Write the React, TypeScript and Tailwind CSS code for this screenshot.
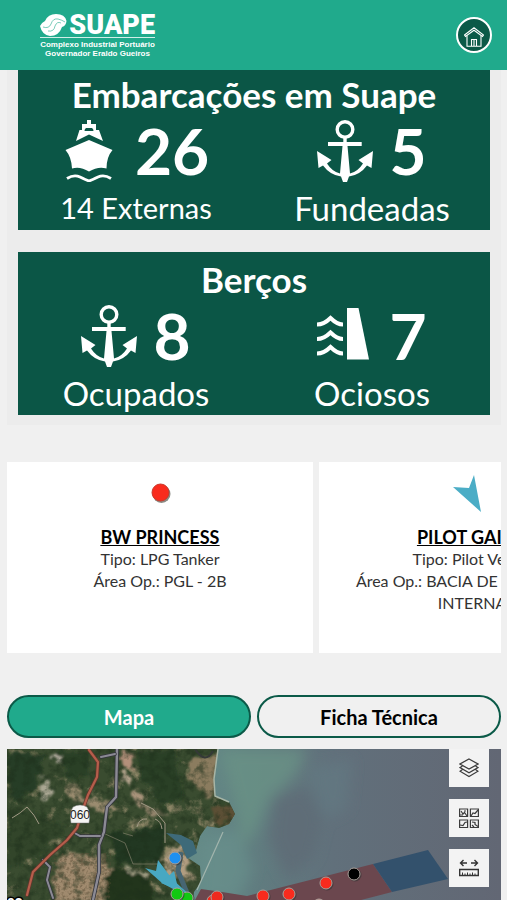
import React, { useState } from "react";

type Vessel = {
  name: string;
  type: string;
  area: string;
  moving: boolean;
};

const vessels: Vessel[] = [
  { name: "BW PRINCESS", type: "LPG Tanker", area: "PGL - 2B", moving: false },
  {
    name: "PILOT GAIBU",
    type: "Pilot Vessel",
    area: "BACIA DE EVOLUÇÃO INTERNA",
    moving: true,
  },
];

const markers = [
  { x: 168, y: 109, color: "#1e90f0" },
  { x: 180, y: 149, color: "#12c812" },
  { x: 170, y: 145, color: "#12c812" },
  { x: 206, y: 152, color: "#f02a1e" },
  { x: 210, y: 148, color: "#f02a1e" },
  { x: 256, y: 147, color: "#f92b1d" },
  { x: 282, y: 145, color: "#f92b1d" },
  { x: 319, y: 134, color: "#f92b1d" },
  { x: 312, y: 156, color: "#d98b8b" },
  { x: 347, y: 125, color: "#000000" },
];

const AnchorIcon = () => (
  <svg viewBox="0 0 56 62" className="h-[62px] w-14" fill="#fff">
    <circle cx="28" cy="9.500" r="7.800" fill="none" stroke="#fff" strokeWidth="3.400" />
    <path d="M26.300 17h3.400v5h15v4H30.500L33 53.500Q41 51.500 46 43.500L41.500 40L56 31L54.500 48L50 45.500Q43 55 32 56.500L30 62H26L24 56.500Q13 55 6 45.500L1.500 48L0 31L14.500 40L10 43.500Q15 51.500 23 53.500L25.500 26H11v-4h15.300z" />
  </svg>
);

const ShipIcon = () => (
  <svg viewBox="0 0 56 62" className="h-[62px] w-14" fill="#fff">
    <path
      fillRule="evenodd"
      d="M24 0h4v4h5v6h3l4 11L26 14.500L13 21l3.500-11H19V4h5zM23 8q-1.500 1-1.500 3h9q0-2-1.500-3z"
    />
    <path d="M26 20L49.500 30Q43.500 37 43.500 48.500Q35 46 26 51.500Q17 46 9 48.500Q8.500 37 2.500 30z" />
    <path
      d="M4 58.500q7-4.500 13-1.500q6 3 9 4q3-1 9-4q6-3 13 1.500"
      fill="none"
      stroke="#fff"
      strokeWidth="2.800"
    />
  </svg>
);

const BerthIcon = () => (
  <svg viewBox="0 0 56 62" className="h-[62px] w-14" fill="#fff">
    <path d="M30 3h11.500l10.500 51.500H30z" />
    <g fill="none" stroke="#fff" strokeWidth="4">
      <path d="M0 19.500q7 0 13.500-6.500q6.500 6.500 12.500 6.500" />
      <path d="M0 34q7 0 13.500-6.500q6.500 6.500 12.500 6.500" />
      <path d="M0 48.500q7 0 13.500-6.500q6.500 6.500 12.500 6.500" />
    </g>
  </svg>
);

type StatProps = {
  icon: React.ReactNode;
  value: number;
  label: string;
  small?: boolean;
};

const Stat = ({ icon, value, label, small }: StatProps) => (
  <div className="flex flex-col items-center">
    <div className="flex h-[66px] items-center justify-center gap-4">
      {icon}
      <span className="text-[64px] leading-[66px] font-bold">{value}</span>
    </div>
    <p className={`${small ? "text-[29px]" : "text-[33px]"} leading-[48px]`}>{label}</p>
  </div>
);

const VesselCard = ({ vessel }: { vessel: Vessel }) => (
  <article className="h-[191px] w-[306px] shrink-0 bg-white px-7 text-center text-[#333]">
    <div className="flex h-16 items-center justify-center">
      {vessel.moving ? (
        <svg viewBox="0 0 44 38" className="h-[38px] w-11">
          <path d="M3 12L19 13L24 0L31 37z" fill="#4badc6" />
        </svg>
      ) : (
        <svg viewBox="0 0 24 24" className="h-6 w-6">
          <circle cx="13.500" cy="12" r="9" fill="#8b8b84" />
          <circle cx="12.500" cy="10.500" r="8.500" fill="#f92b1d" stroke="#c9392c" />
        </svg>
      )}
    </div>
    <h3 className="text-lg leading-[22px] font-bold text-black underline">
      <a href="#ficha">{vessel.name}</a>
    </h3>
    <p className="text-base leading-[22px]">Tipo: {vessel.type}</p>
    <p className="text-base leading-[22px]">Área Op.: {vessel.area}</p>
  </article>
);

const PortMap = () => (
  <svg
    viewBox="0 0 494 151"
    preserveAspectRatio="xMinYMin slice"
    className="absolute inset-0 h-full w-full"
  >
    <defs>
      <linearGradient id="sea" x1="0" x2="1" y1="0" y2="0">
        <stop offset="0.38" stopColor="#648a87" />
        <stop offset="0.48" stopColor="#607e80" />
        <stop offset="0.66" stopColor="#61707b" />
        <stop offset="1" stopColor="#626774" />
      </linearGradient>
      <clipPath id="coast">
        <path d="M0 0H211L207 30L208 47L222 53L228 65L222 75L212 79L200 77L193 87L189 101L181 109L193 117L194 133L187 143L186 151H0z" />
      </clipPath>
      {/* speckled ground: bare soil patches over forest */}
      <filter id="soil" x="0" y="0" width="100%" height="100%" colorInterpolationFilters="sRGB">
        <feTurbulence type="fractalNoise" baseFrequency="0.06" numOctaves="5" seed="8" />
        <feColorMatrix values="0 0 0 0 0.55  0 0 0 0 0.52  0 0 0 0 0.4  5 0 0 0 -2.9" />
      </filter>
      <filter id="forest" x="0" y="0" width="100%" height="100%" colorInterpolationFilters="sRGB">
        <feTurbulence type="fractalNoise" baseFrequency="0.12" numOctaves="4" seed="3" />
        <feColorMatrix values="0 0 0 0 0.12  0 0 0 0 0.19  0 0 0 0 0.11  0 3 0 0 -1.3" />
      </filter>
      <filter id="town" x="0" y="0" width="100%" height="100%" colorInterpolationFilters="sRGB">
        <feTurbulence type="fractalNoise" baseFrequency="0.3" numOctaves="3" seed="5" />
        <feColorMatrix values="0 0 0 0 0.36  0 0 0 0 0.31  0 0 0 0 0.22  0 4 0 0 -1.9" />
      </filter>
      <filter id="soft" x="-30%" y="-30%" width="160%" height="160%">
        <feGaussianBlur stdDeviation="7" />
      </filter>
      <filter id="edge">
        <feTurbulence type="fractalNoise" baseFrequency="0.12" numOctaves="3" seed="2" />
        <feDisplacementMap in="SourceGraphic" scale="14" xChannelSelector="R" yChannelSelector="G" />
        <feGaussianBlur stdDeviation="0.8" />
      </filter>
    </defs>

    <rect width="494" height="151" fill="url(#sea)" />
    <g filter="url(#soft)">
      <path d="M212 0H300L290 24L278 36L262 50L250 80L236 100L228 60z" fill="#6b9586" opacity="0.7" />
      <path d="M268 48L300 38L316 70L306 110L280 130L262 90z" fill="#5f6b77" opacity="0.8" />
      <path d="M196 90L228 80L246 120L230 151H190z" fill="#6a908c" opacity="0.7" />
      <path d="M300 20L345 10L340 60L318 70z" fill="#637d86" opacity="0.5" />
    </g>

    <g clipPath="url(#coast)">
      <rect width="240" height="151" fill="#3a4c30" />
      <rect width="240" height="151" filter="url(#soil)" />
      <g filter="url(#edge)">
        <path d="M102 82L128 84L160 74L154 115L110 114z" fill="#223822" />
        <path d="M100 118L142 124L148 156H98z" fill="#24341f" />
        <path d="M128 4L170 0L176 50L154 56L138 34z" fill="#2b4126" />
        <path d="M2 4L36 4L30 40L8 54L2 40z" fill="#283d25" />
        <path d="M50 2L80 2L84 26L60 30z" fill="#2b4126" />
        <path d="M2 62L36 66L60 80L30 108L2 120z" fill="#30452a" />
        <path d="M178 12L213 4L210 44L200 50L182 30z" fill="#8b7c5e" />
        <path d="M204 58L228 56L230 70L210 78z" fill="#5b4f34" />
        <path d="M52 106L96 108L104 120L94 156H48L46 132z" fill="#a08a6e" />
        <path d="M162 100L176 94L182 104L180 118L188 130L172 132L156 124z" fill="#b19d80" />
        <path d="M114 2L126 2L124 18L116 20z" fill="#b3907a" />
        <path d="M36 26L44 32L42 50L36 52L32 44z" fill="#a9a692" />
        <path d="M58 38L68 34L78 50L104 52L110 62L92 62L72 54L60 48z" fill="#9b8c70" />
        <path d="M126 40L136 44L142 60L160 64L154 68L136 62L126 52z" fill="#a8937a" />
        <path d="M120 120L142 120L142 126L120 125z" fill="#9d9a80" />
        <path d="M46 6L54 6L52 16L46 14z" fill="#b0aa9c" />
        <path d="M116 22L124 26L122 36L116 32z" fill="#b3a38c" />
      </g>
      <rect width="240" height="151" filter="url(#forest)" opacity="0.55" />
      <rect x="44" y="104" width="60" height="47" filter="url(#town)" opacity="0.5" />
      <g fill="none" stroke="#a39a86" strokeWidth="1">
        <path d="M5 69Q14 64 20 58Q28 66 32 75" />
        <path d="M130 78Q132 69 140 70M148 70Q154 72 155 80" />
        <path d="M116 84l10 3M96 84l22 10l8 21h26" opacity="0.5" />
        <path d="M134 54L146 60L158 74V94" />
      </g>
    </g>
    <path d="M211 0L207 30L208 47L222 53" fill="none" stroke="#a7b5a6" strokeWidth="1.500" />
    <path d="M216 83L190 141" stroke="#a2b5ad" strokeWidth="1.200" />
    <path d="M188 0q10 16 18 2" fill="none" stroke="#353937" strokeWidth="2" />
    <path d="M159 84L174 86L186 92L190 104L180 110L174 96z" fill="#3e6a79" />
    <path d="M174 103L171 122L180 144" fill="none" stroke="#466572" strokeWidth="5" />

    {/* roads */}
    <g fill="none" strokeLinecap="round">
      <path d="M110 0L109 48L100 58L97 83L92 96L92 123L86 151" stroke="#34353c" strokeWidth="4" />
      <path d="M110 0L109 48L100 58L97 83L92 96L92 123L86 151" stroke="#8b8a94" strokeWidth="2.400" />
      <path d="M66 83L73 87H93M36 111L43 118L40 131L46 149M94 8L108 5" stroke="#34353c" strokeWidth="3.400" />
      <path d="M66 83L73 87H93M36 111L43 118L40 131L46 149M94 8L108 5" stroke="#8b8a94" strokeWidth="2" />
      <path d="M82 1L91 13L90 28L81 46L75 63L70 79L60 91L43 106L26 123L20 146" stroke="#66362d" strokeWidth="3.600" />
      <path d="M82 1L91 13L90 28L81 46L75 63L70 79L60 91L43 106L26 123L20 146" stroke="#b55e4b" strokeWidth="2.200" />
    </g>
    <path d="M66 58Q73 54 80 58Q84 64 82 74H64Q62 64 66 58z" fill="#f4f4f2" stroke="#777" strokeWidth="0.500" />
    <text x="73" y="70" textAnchor="middle" fontSize="12" fill="#222" className="font-['Liberation_Sans']">
      060
    </text>
    <text x="0" y="159" fontSize="14" fill="#fff" stroke="#000" strokeWidth="3" paintOrder="stroke" className="font-['Liberation_Sans'] font-bold">
      02
    </text>

    {/* port areas */}
    <path d="M188 151L194 140L215 143L240 147L366 115L385 143L354 151z" fill="#6b474e" />
    <path d="M366 115L421 101L441 130L385 143z" fill="#33516c" />
    <path d="M138 119L149 122L151 111L165 130L184 147L168 141L155 134z" fill="#48a8c2" />
    <path d="M154 134L167 122L171 139L186 147z" fill="#48a8c2" />

    {markers.map((marker) => (
      <g key={`${marker.x}-${marker.y}`}>
        <circle cx={marker.x + 1} cy={marker.y + 1} r="6.500" fill="#333" opacity="0.6" />
        <circle cx={marker.x} cy={marker.y} r="6" fill={marker.color} stroke="#a8a09a" />
      </g>
    ))}
  </svg>
);

const LayersIcon = () => (
  <svg viewBox="0 0 20 20" className="h-5 w-5" fill="none" stroke="#3c3c3c" strokeWidth="1.200">
    <path d="M10 1L19 6L10 11L1 6z" />
    <path d="M3.500 8L1 9.600L10 14.800L19 9.600L16.500 8M3.500 11.500L1 13.200L10 18.500L19 13.200L16.500 11.500" />
  </svg>
);

const BasemapIcon = () => (
  <svg viewBox="0 0 20 20" className="h-5 w-5" fill="none" stroke="#3c3c3c" strokeWidth="1.200">
    <path d="M.6 1h8v7.500h-8zM11.400 1h8v7.500h-8zM.6 12h8v7.500h-8zM11.400 12h8v7.500h-8z" />
    <path d="M2 3l2 3l1.500-1.500L8 8M5 3h2M1 7h3M12 8l2-3l2 .5l3-3.500M1 17l3 .5l2-3l2-.5M13 14l3 .5v2l3 2M13 17l2 2" />
  </svg>
);

const MeasureIcon = () => (
  <svg viewBox="0 0 20 20" className="h-5 w-5" fill="none" stroke="#333">
    <path d="M1.500 5H8M4.500 2L1.500 5l3 3M18.500 5H12M15.500 2l3 3l-3 3" strokeWidth="1.400" />
    <path d="M.7 11.500h18.600v6H.7z" strokeWidth="1.400" />
    <path d="M3.500 17v-2.500M6 17v-1.500M8.500 17v-2.500M11 17v-1.500M13.500 17v-2.500M16 17v-1.500" />
  </svg>
);

const mapTools = [
  { label: "Camadas", icon: <LayersIcon /> },
  { label: "Mapas base", icon: <BasemapIcon /> },
  { label: "Medir", icon: <MeasureIcon /> },
];

const App = () => {
  const [tab, setTab] = useState("mapa");

  const tabClass = (name: string) =>
    `${
      tab === name ? "bg-[#20aa8c] text-white" : "text-black"
    } h-[43px] flex-1 rounded-full border-2 border-[#0b5a48] text-xl font-bold`;

  return (
    <div className="flex min-h-screen flex-col bg-[#f0f0f0] font-['Lato',sans-serif]">
      <header className="flex h-[70px] items-center justify-between bg-[#20aa8c] pr-[15px] pl-10 text-white">
        <div className="w-[115px] font-['Liberation_Sans',sans-serif]">
          <div className="flex h-[26px] items-center justify-between border-b border-white/80">
            <svg viewBox="0 0 28 22" className="h-[22px] w-7">
              <path
                d="M0 12Q1 9 5 7Q8 0 16 0Q25 0 26.500 7Q26 12 22 13Q19 22 10 22Q2 21 0 12z"
                fill="#fff"
              />
              <path
                d="M3 13Q9 15 11 10Q13 4 18 5Q22 6 25 8M8 17Q14 18 15 12Q17 7 21 9"
                fill="none"
                stroke="#20aa8c"
                strokeWidth="0.600"
              />
            </svg>
            <span className="font-['Roboto',sans-serif] text-[27px] leading-[22px] font-black">SUAPE</span>
          </div>
          <p className="mt-[2px] text-center text-[8px] leading-[9px] font-bold whitespace-nowrap">
            Complexo Industrial Portuário
            <br />
            Governador Eraldo Gueiros
          </p>
        </div>
        <button
          type="button"
          aria-label="Início"
          className="flex h-9 w-9 items-center justify-center rounded-full border-2 border-white bg-[#0b5a48]"
        >
          <svg viewBox="0 0 20 20" className="mt-1 h-5 w-5" fill="none" stroke="#fff" strokeWidth="1.100">
            <path d="M.5 8L10 .8L19.500 8L18.500 9.500L10 3.200L1.500 9.500z" />
            <path d="M3 8.500V19.300H17V8.500M7.500 19V12.500H12.500V19M10 12.500V19" />
          </svg>
        </button>
      </header>

      <main className="flex flex-1 flex-col pr-[6px] pl-[7px]">
        <div className="space-y-[22px] bg-[#ececec] px-[11px] pb-[10px] text-white">
          <section className="h-40 bg-[#0b5646]">
            <h2 className="text-center text-[35px] leading-[48px] font-bold">Embarcações em Suape</h2>
            <div className="grid grid-cols-2">
              <Stat icon={<ShipIcon />} value={26} label="14 Externas" small />
              <Stat icon={<AnchorIcon />} value={5} label="Fundeadas" />
            </div>
          </section>
          <section className="h-[163px] bg-[#0b5646] pt-[3px]">
            <h2 className="text-center text-[35px] leading-[48px] font-bold">Berços</h2>
            <div className="grid grid-cols-2">
              <Stat icon={<AnchorIcon />} value={8} label="Ocupados" />
              <Stat icon={<BerthIcon />} value={7} label="Ociosos" />
            </div>
          </section>
        </div>

        <div className="mt-[37px] flex gap-[6px] overflow-hidden">
          {vessels.map((vessel) => (
            <VesselCard key={vessel.name} vessel={vessel} />
          ))}
        </div>

        <div className="mt-[42px] flex gap-[6px]">
          <button type="button" onClick={() => setTab("mapa")} className={tabClass("mapa")}>
            Mapa
          </button>
          <button type="button" onClick={() => setTab("ficha")} className={tabClass("ficha")}>
            Ficha Técnica
          </button>
        </div>

        <div className="relative mt-[11px] min-h-[150px] flex-1 overflow-hidden">
          <PortMap />
          <div className="absolute top-0 right-3 flex flex-col gap-3">
            {mapTools.map((tool) => (
              <button
                key={tool.label}
                type="button"
                aria-label={tool.label}
                className="flex h-[38px] w-10 items-center justify-center bg-[#f3f3f3]"
              >
                {tool.icon}
              </button>
            ))}
          </div>
        </div>
      </main>
    </div>
  );
};

export default App;
